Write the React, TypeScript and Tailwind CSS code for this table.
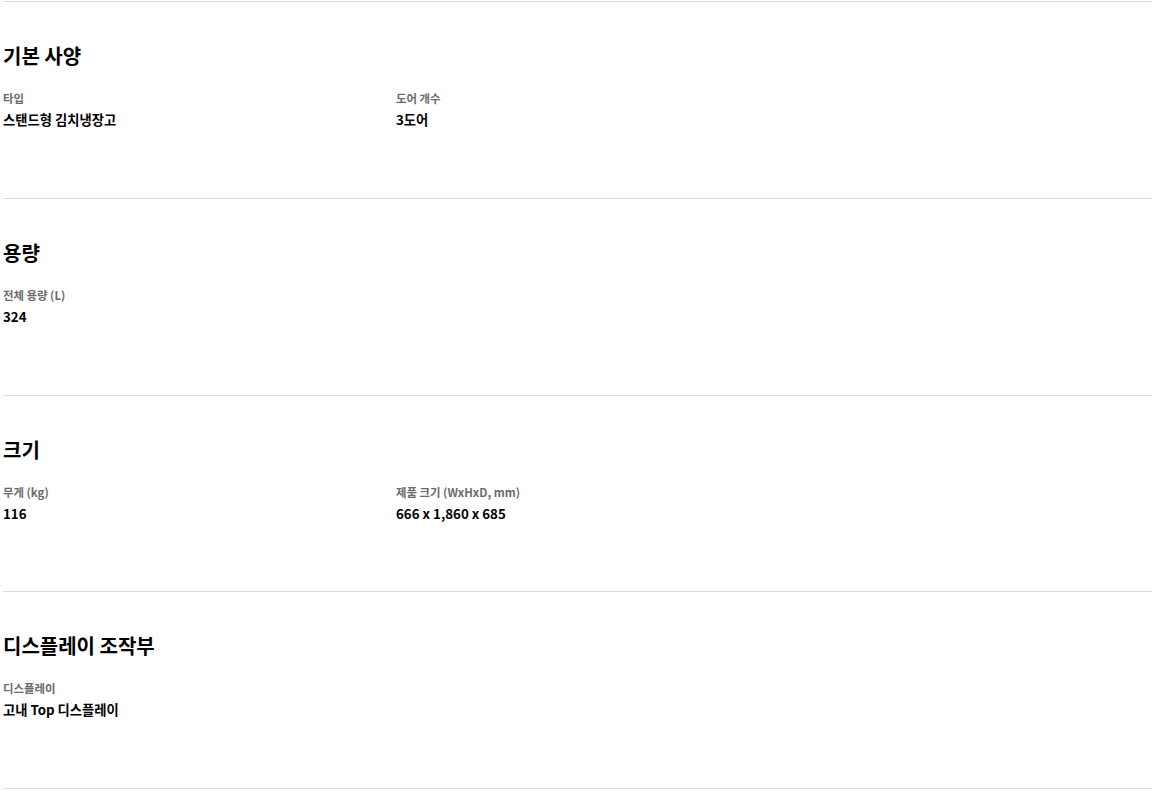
const sections = [
  {
    title: "기본 사양",
    items: [
      { label: "타입", value: "스탠드형 김치냉장고" },
      { label: "도어 개수", value: "3도어" },
    ],
  },
  {
    title: "용량",
    items: [{ label: "전체 용량 (L)", value: "324" }],
  },
  {
    title: "크기",
    items: [
      { label: "무게 (kg)", value: "116" },
      { label: "제품 크기 (WxHxD, mm)", value: "666 x 1,860 x 685" },
    ],
  },
  {
    title: "디스플레이 조작부",
    items: [{ label: "디스플레이", value: "고내 Top 디스플레이" }],
  },
]

export default function App() {
  return (
    <div
      className="min-h-screen bg-white pl-[3px] pt-px"
      style={{ fontFamily: "'Noto Sans CJK KR', 'Noto Sans', sans-serif" }}
    >
      {sections.map((s) => (
        <section key={s.title} className="h-[196.75px] border-t border-[#dddddd] pt-10">
          <h2 className="h-7 text-xl leading-7 font-bold text-black">{s.title}</h2>
          <dl className="mt-5 grid grid-cols-[393px_1fr]">
            {s.items.map((it) => (
              <div key={it.label}>
                <dt className="h-4 text-[11.4px] leading-4 font-bold text-[#6b6b6b]">{it.label}</dt>
                <dd className="mt-1 h-5 text-[13.3px] leading-5 font-bold text-black">{it.value}</dd>
              </div>
            ))}
          </dl>
        </section>
      ))}
      <div className="border-t border-[#dddddd]" />
    </div>
  )
}
